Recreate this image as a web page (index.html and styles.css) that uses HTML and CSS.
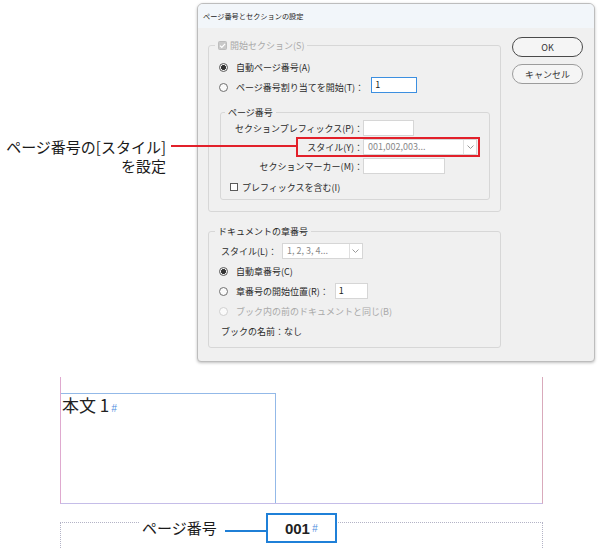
FILE: index.html
```html
<!DOCTYPE html>
<html lang="ja">
<head>
  <meta charset="UTF-8" />
  <title>ページ番号とセクションの設定</title>
  <link rel="stylesheet" href="styles.css">
</head>
<body>

  <div class="figure">

    <div class="top">
      <div class="callout">ページ番号の[スタイル]<br>を設定</div>

      <div class="dialog">
        <div class="titlebar">ページ番号とセクションの設定</div>

        <div class="dialog-body">
          <div class="dialog-main">

            <div class="group group-start">
              <div class="group-title disabled">
                <svg class="legend-check" width="9" height="9" viewBox="0 0 9 9"><rect x=".5" y=".5" width="8" height="8" rx="1" fill="#c9c9c9" stroke="#bcbcbc"/><path d="M2 4.6l1.8 1.8L7.1 2.9" fill="none" stroke="#fff" stroke-width="1.3"/></svg>
                開始セクション(S)
              </div>
              <div class="row row-first"><span class="radio on"></span>自動ページ番号(A)</div>
              <div class="row"><span class="radio"></span>ページ番号割り当てを開始(T)：<span class="field field-focus start-field">1</span></div>

              <div class="group group-sub">
                <div class="group-title">ページ番号</div>
                <div class="form-grid">
                  <span class="form-label">セクションプレフィックス(P)：</span>
                  <span class="field prefix-field"></span>
                  <span class="form-label">スタイル(Y)：</span>
                  <span class="select style-select">
                    <span class="select-value">001,002,003...</span>
                    <span class="select-arrow"><svg width="7" height="4" viewBox="0 0 7 4"><path d="M.5 .5L3.5 3.5L6.5 .5" fill="none" stroke="#9a9a9a"/></svg></span>
                  </span>
                  <span class="form-label">セクションマーカー(M)：</span>
                  <span class="field marker-field"></span>
                </div>
                <div class="row row-check"><span class="check"></span>プレフィックスを含む(I)</div>
              </div>
            </div>

            <div class="group group-chapter">
              <div class="group-title">ドキュメントの章番号</div>
              <div class="row row-plain row-first">スタイル(L)：<span class="select chapter-select">
                  <span class="select-value">1, 2, 3, 4...</span>
                  <span class="select-arrow"><svg width="7" height="4" viewBox="0 0 7 4"><path d="M.5 .5L3.5 3.5L6.5 .5" fill="none" stroke="#9a9a9a"/></svg></span>
                </span></div>
              <div class="row"><span class="radio on"></span>自動章番号(C)</div>
              <div class="row"><span class="radio"></span>章番号の開始位置(R)：<span class="field chapter-field">1</span></div>
              <div class="row disabled"><span class="radio off"></span>ブック内の前のドキュメントと同じ(B)</div>
              <div class="row row-plain">ブックの名前：なし</div>
            </div>

          </div>

          <div class="dialog-buttons">
            <div class="btn btn-ok">OK</div>
            <div class="btn btn-cancel">キャンセル</div>
          </div>
        </div>
      </div>
    </div>

    <div class="canvas">
      <div class="spread">
        <div class="text-frame">本文 1<span class="hash">#</span></div>
      </div>
      <div class="slug"></div>
      <div class="folio-row">
        <span class="folio-label">ページ番号</span>
        <span class="folio-leader"></span>
        <span class="folio-box">001<span class="hash">#</span></span>
      </div>
    </div>

    <div class="highlight"></div>
    <div class="red-leader"></div>

  </div>

</body>
</html>
```

FILE: styles.css
```css
html, body {
  margin: 0;
  padding: 0;
  background: #fff;
}
body {
  width: 600px;
  height: 548px;
  overflow: hidden;
  font-family: "Noto Sans CJK JP", sans-serif;
  color: #1b1b1b;
}

.figure {
  position: relative;
  width: 600px;
  height: 548px;
}

/* upper half: callout + dialog */
.top {
  display: flex;
  height: 377px;
  padding-top: 3px;
  box-sizing: border-box;
}
.callout {
  width: 197px;
  flex: none;
  box-sizing: border-box;
  padding: 134px 31px 0 0;
  text-align: right;
  font-size: 15px;
  line-height: 19px;
  color: #1a1a1a;
}

.dialog {
  width: 398px;
  height: 359px;
  flex: none;
  box-sizing: border-box;
  border: 1px solid #bdbdbd;
  border-radius: 6px 6px 4px 4px;
  background: #f0f0f0;
  box-shadow: 0 1px 3px rgba(0,0,0,0.25);
  display: flex;
  flex-direction: column;
  overflow: hidden;
  color: #2a2a2a;
}
.titlebar {
  height: 24px;
  flex: none;
  background: #f2f6fa;
  padding-left: 5px;
  font-size: 7.2px;
  line-height: 24px;
  color: #222;
}

.dialog-body {
  display: flex;
  align-items: flex-start;
  gap: 11px;
  padding: 9px 11px 0 10px;
}
.dialog-main {
  width: 293px;
  flex: none;
  padding-top: 8px;
}
.dialog-buttons {
  width: 71px;
  flex: none;
  display: flex;
  flex-direction: column;
  gap: 7px;
}
.btn {
  height: 20px;
  box-sizing: border-box;
  border: 1.5px solid #4a4a4a;
  border-radius: 10px;
  background: #f5f5f5;
  display: flex;
  align-items: center;
  justify-content: center;
  font-size: 9px;
  color: #333;
}
.btn-cancel {
  border-color: #9c9c9c;
}

/* group boxes */
.group {
  border: 1px solid #d7d7d7;
  border-radius: 3px;
  box-sizing: border-box;
}
.group-start {
  padding-bottom: 11px;
}
.group-sub {
  margin: 15px 10px 0 11px;
  padding-bottom: 3px;
}
.group-chapter {
  margin-top: 19px;
  padding-bottom: 6px;
}
.group-title {
  display: flex;
  align-items: center;
  gap: 3px;
  width: fit-content;
  height: 13px;
  margin: -7px 0 0 6px;
  padding: 0 3px;
  background: #f0f0f0;
  font-size: 9px;
  line-height: 13px;
}
.group-sub .group-title {
  margin-left: 4px;
}
.disabled {
  color: #a9a9a9;
}

.row {
  display: flex;
  align-items: center;
  height: 20px;
  padding-left: 10px;
  font-size: 9px;
  white-space: nowrap;
}
.row-first {
  margin-top: 5px;
}
.group-chapter .row-first {
  margin-top: 3px;
}
.row-plain {
  padding-left: 12px;
}
.row-check {
  height: 18px;
  margin-top: 3px;
  padding-left: 9px;
}

.radio {
  width: 9px;
  height: 9px;
  flex: none;
  box-sizing: border-box;
  border: 1px solid #707070;
  border-radius: 50%;
  background: #fafafa;
  margin-right: 8px;
}
.radio.on {
  border-color: #5a5a5a;
  background: radial-gradient(circle, #333 0 2.2px, #f4f4f4 2.8px);
}
.radio.off {
  border-color: #d0d0d0;
}
.check {
  width: 8px;
  height: 8px;
  flex: none;
  box-sizing: border-box;
  border: 1px solid #5a5a5a;
  background: #fff;
  margin-right: 4px;
}
.legend-check {
  flex: none;
}

/* inputs */
.field {
  display: inline-block;
  height: 16px;
  box-sizing: border-box;
  border: 1px solid #d6d6d6;
  background: #fff;
  padding-left: 3px;
  font-size: 9px;
  line-height: 14px;
  color: #222;
}
.field-focus {
  border-color: #3c8fe0;
}
.start-field {
  width: 46px;
  margin: 0 0 4px 7px;
}
.prefix-field { width: 51px; }
.marker-field { width: 82px; }
.chapter-field {
  width: 33px;
  margin-left: 6px;
}

.select {
  display: flex;
  height: 16px;
  box-sizing: border-box;
  border: 1px solid #d6d6d6;
  background: #fff;
  font-size: 9px;
  line-height: 14px;
  color: #8a8a8a;
}
.select-value {
  flex: 1;
  padding-left: 4px;
}
.select-arrow {
  width: 12px;
  border-left: 1px solid #e0e0e0;
  display: flex;
  align-items: center;
  justify-content: center;
}
.style-select { width: 114px; }
.chapter-select {
  width: 81px;
  margin-left: 5px;
}

.form-grid {
  display: grid;
  grid-template-columns: 142px auto;
  grid-auto-rows: 18px;
  row-gap: 1px;
  align-items: center;
  justify-items: start;
  font-size: 9px;
  white-space: nowrap;
}
.form-label {
  justify-self: end;
}

/* lower half: page layout */
.canvas {
  position: relative;
  height: 171px;
}
.spread {
  margin-left: 60px;
  width: 483px;
  height: 127px;
  box-sizing: border-box;
  padding-top: 16px;
  border-left: 1px solid #dfa9cf;
  border-right: 1px solid #d9aabb;
  border-bottom: 1px solid #c5bde8;
}
.text-frame {
  width: 215px;
  height: 110px;
  box-sizing: border-box;
  border-top: 1px solid #93b9e8;
  border-right: 1px solid #93b9e8;
  padding: 1px 0 0 1px;
  font-size: 17px;
  line-height: 20px;
  color: #222;
}
.hash {
  font-family: "Liberation Sans", sans-serif;
  font-size: 10px;
  font-weight: normal;
  font-style: italic;
  color: #4f8ee0;
  margin-left: 2px;
}
.slug {
  position: absolute;
  left: 60px;
  top: 145px;
  width: 483px;
  height: 30px;
  box-sizing: border-box;
  border: 1px dotted #b3b3c6;
  border-bottom: none;
}
.folio-row {
  position: relative;
  z-index: 1;
  display: flex;
  align-items: center;
  width: fit-content;
  margin: 9px 0 0 140px;
  padding-left: 2px;
  background: #fff;
}
.folio-label {
  font-size: 15px;
  line-height: 20px;
  color: #1a1a1a;
}
.folio-leader {
  width: 41px;
  height: 2px;
  margin: 5px 0 0 8px;
  background: #1f7fd6;
}
.folio-box {
  width: 71px;
  height: 30px;
  box-sizing: border-box;
  border: 2px solid #1f80d8;
  background: #fff;
  display: flex;
  align-items: center;
  justify-content: center;
  font-family: "Liberation Sans", sans-serif;
  font-weight: bold;
  font-size: 15px;
  color: #222;
}

/* annotation overlays */
.highlight {
  position: absolute;
  left: 296px;
  top: 137px;
  width: 184px;
  height: 20px;
  box-sizing: border-box;
  border: 2px solid #e2202a;
}
.red-leader {
  position: absolute;
  left: 171px;
  top: 145px;
  width: 125px;
  height: 2px;
  background: #e2202a;
}
```
